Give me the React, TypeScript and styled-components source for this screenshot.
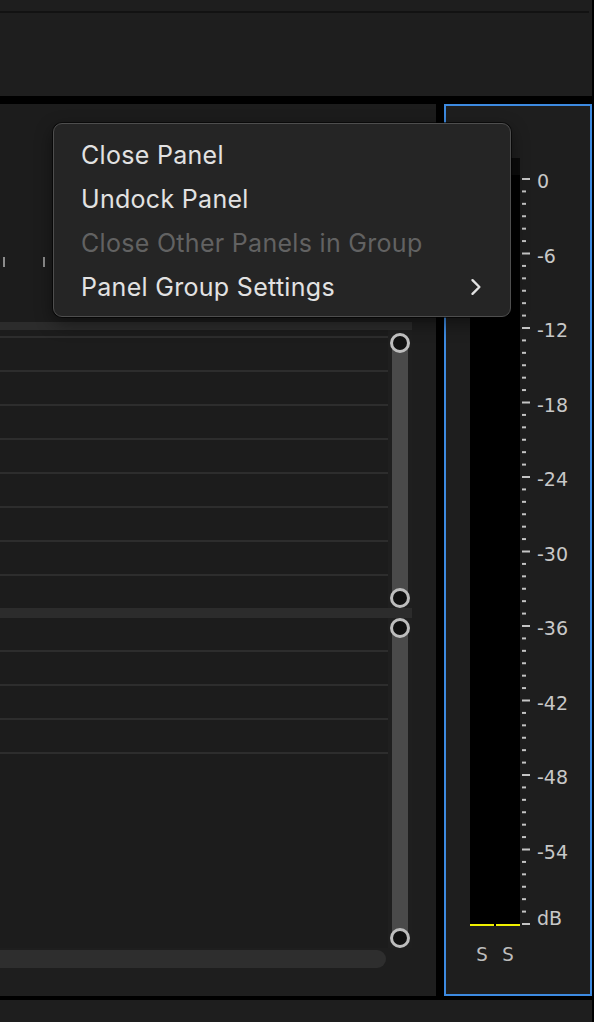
import React from 'react';
import styled, { createGlobalStyle } from 'styled-components';

const GlobalStyle = createGlobalStyle`
  html, body {
    margin: 0;
    padding: 0;
    background: #000;
  }
  body {
    font-family: Inter, "Liberation Sans", sans-serif;
  }
`;

const DB_PER_PX = 745 / 60;
const scaleLabels = ['0', '-6', '-12', '-18', '-24', '-30', '-36', '-42', '-48', '-54', 'dB'];

const menuItems = [
  { label: 'Close Panel' },
  { label: 'Undock Panel' },
  { label: 'Close Other Panels in Group', disabled: true },
  { label: 'Panel Group Settings', submenu: true },
];

export default function App() {
  return (
    <Screen>
      <GlobalStyle />
      <TopPanel>
        <TopDivider />
      </TopPanel>

      <Workspace>
        <TimelinePanel>
          <Header>
            <Ruler>
              {Array.from({ length: 11 }).map((_, i) => (
                <RulerTick key={i} />
              ))}
            </Ruler>
          </Header>
          <Band $h={8} />
          <TrackGroup $h={278}>
            <Lanes>
              <Lane $h={8} />
              {Array.from({ length: 7 }).map((_, i) => (
                <Lane key={i} />
              ))}
            </Lanes>
            <SliderCol $top={3}>
              <Handle />
              <Rail />
              <Handle />
            </SliderCol>
          </TrackGroup>
          <Band $h={10} />
          <TrackGroup $h={330}>
            <Lanes>
              {Array.from({ length: 4 }).map((_, i) => (
                <Lane key={i} />
              ))}
            </Lanes>
            <SliderCol $top={0}>
              <Handle />
              <Rail />
              <Handle />
            </SliderCol>
          </TrackGroup>
          <Footer>
            <HScroll />
          </Footer>
        </TimelinePanel>

        <MeterPanel>
          <MeterRow>
            <Bars>
              <Peak />
              <Channels>
                <Channel>
                  <Floor />
                </Channel>
                <Channel>
                  <Floor />
                </Channel>
              </Channels>
            </Bars>
            <Scale>
              <svg width="12" height="768" viewBox="0 0 12 768">
                {Array.from({ length: 61 }).map((_, k) => {
                  const y = 21 + k * DB_PER_PX;
                  return (
                    <line
                      key={k}
                      x1={2}
                      x2={k % 6 === 0 ? 10 : 6}
                      y1={y}
                      y2={y}
                      stroke="#c4c4c4"
                      strokeWidth={2}
                    />
                  );
                })}
              </svg>
              <Labels>
                {scaleLabels.map((l) => (
                  <ScaleLabel key={l} $shift={l === 'dB' ? -6 : 2}>
                    {l}
                  </ScaleLabel>
                ))}
              </Labels>
            </Scale>
          </MeterRow>
          <ChannelNames>
            <ChannelName>S</ChannelName>
            <ChannelName>S</ChannelName>
          </ChannelNames>
        </MeterPanel>
      </Workspace>

      <BottomPanel />

      <Menu>
        {menuItems.map((item) => (
          <MenuItem key={item.label} $disabled={item.disabled}>
            <span>{item.label}</span>
            {item.submenu && (
              <svg width="12" height="18" viewBox="0 0 12 18">
                <path
                  d="M2.5 2.2 L9.4 9 L2.5 15.8"
                  fill="none"
                  stroke="#e2e2e2"
                  strokeWidth="2.4"
                  strokeLinecap="round"
                  strokeLinejoin="round"
                />
              </svg>
            )}
          </MenuItem>
        ))}
      </Menu>
    </Screen>
  );
}

const Screen = styled.div`
  width: 594px;
  height: 1022px;
  background: #000;
  display: flex;
  flex-direction: column;
  position: relative;
  overflow: hidden;
`;

const TopPanel = styled.div`
  width: 592px;
  height: 96px;
  background: #1e1e1e;
  display: flex;
  flex-direction: column;
`;

const TopDivider = styled.div`
  margin-top: 11px;
  width: 589px;
  height: 2px;
  background: #121212;
`;

const Workspace = styled.div`
  margin-top: 8px;
  height: 892px;
  display: flex;
  gap: 8px;
`;

const TimelinePanel = styled.div`
  width: 436px;
  background: #1e1e1e;
  display: flex;
  flex-direction: column;
`;

const Header = styled.div`
  height: 218px;
  background: #1c1c1c;
`;

const Ruler = styled.div`
  margin-top: 153px;
  padding-left: 3px;
  display: flex;
  gap: 38px;
`;

const RulerTick = styled.div`
  width: 2px;
  height: 10px;
  background: #8c8c8c;
`;

const Band = styled.div<{ $h: number }>`
  width: 412px;
  height: ${(p) => p.$h}px;
  background: #2c2c2c;
`;

const TrackGroup = styled.div<{ $h: number }>`
  height: ${(p) => p.$h}px;
  display: flex;
  overflow: hidden;
`;

const Lanes = styled.div`
  width: 388px;
  background: #1c1c1c;
  display: flex;
  flex-direction: column;
`;

const Lane = styled.div<{ $h?: number }>`
  flex: none;
  height: ${(p) => p.$h ?? 34}px;
  box-sizing: border-box;
  border-bottom: 2px solid #2d2d2d;
`;

const SliderCol = styled.div<{ $top: number }>`
  width: 24px;
  padding-top: ${(p) => p.$top}px;
  display: flex;
  flex-direction: column;
  align-items: center;
  background: #1f1f1f;
`;

const Handle = styled.div`
  flex: none;
  position: relative;
  z-index: 1;
  width: 20px;
  height: 20px;
  box-sizing: border-box;
  border-radius: 50%;
  border: 3px solid #bdbdbd;
  background: #111;
`;

const Rail = styled.div`
  flex: 1;
  width: 16px;
  margin: -10px 0;
  background: #4a4a4a;
`;

const Footer = styled.div`
  flex: 1;
  padding-top: 2px;
`;

const HScroll = styled.div`
  width: 386px;
  height: 18px;
  border-radius: 0 9px 9px 0;
  background: #2e2e2e;
`;

const MeterPanel = styled.div`
  width: 148px;
  box-sizing: border-box;
  border: 2px solid #3d8ae0;
  background: #1e1e1e;
  padding: 52px 0 0 24px;
  display: flex;
  flex-direction: column;
`;

const MeterRow = styled.div`
  display: flex;
`;

const Bars = styled.div`
  width: 50px;
  height: 768px;
  background: #000;
  display: flex;
  flex-direction: column;
`;

const Peak = styled.div`
  height: 17px;
  background: #0b0b0b;
`;

const Channels = styled.div`
  flex: 1;
  display: flex;
  gap: 2px;
`;

const Channel = styled.div`
  width: 24px;
  display: flex;
  flex-direction: column;
  justify-content: flex-end;
`;

const Floor = styled.div`
  height: 2px;
  background: #f0f000;
`;

const Scale = styled.div`
  display: flex;
`;

const Labels = styled.div`
  margin: 21px 0 0 5px;
  height: 745px;
  display: flex;
  flex-direction: column;
  justify-content: space-between;
`;

const ScaleLabel = styled.div<{ $shift: number }>`
  height: 0;
  display: flex;
  align-items: center;
  transform: translateY(${(p) => p.$shift}px);
  font-family: "DejaVu Sans", sans-serif;
  font-size: 19px;
  color: #c8c8c8;
  white-space: nowrap;
`;

const ChannelNames = styled.div`
  margin-top: 18px;
  width: 50px;
  display: flex;
  gap: 2px;
`;

const ChannelName = styled.div`
  width: 24px;
  text-align: center;
  line-height: 20px;
  font-family: "DejaVu Sans Mono", monospace;
  font-size: 20px;
  color: #bdbdbd;
`;

const BottomPanel = styled.div`
  margin-top: 4px;
  width: 592px;
  flex: 1;
  background: #1e1e1e;
`;

const Menu = styled.div`
  position: absolute;
  left: 53px;
  top: 123px;
  width: 458px;
  height: 194px;
  box-sizing: border-box;
  padding: 9px 0;
  border: 1px solid #4e4e4e;
  border-radius: 9px;
  background: #252525;
  box-shadow: 0 0 0 1px rgba(0, 0, 0, 0.6), 0 6px 18px rgba(0, 0, 0, 0.45);
`;

const MenuItem = styled.div<{ $disabled?: boolean }>`
  height: 44px;
  padding: 0 28px 0 27px;
  display: flex;
  align-items: center;
  justify-content: space-between;
  font-size: 25px;
  letter-spacing: 0.3px;
  color: ${(p) => (p.$disabled ? '#626262' : '#e2e2e2')};
`;
